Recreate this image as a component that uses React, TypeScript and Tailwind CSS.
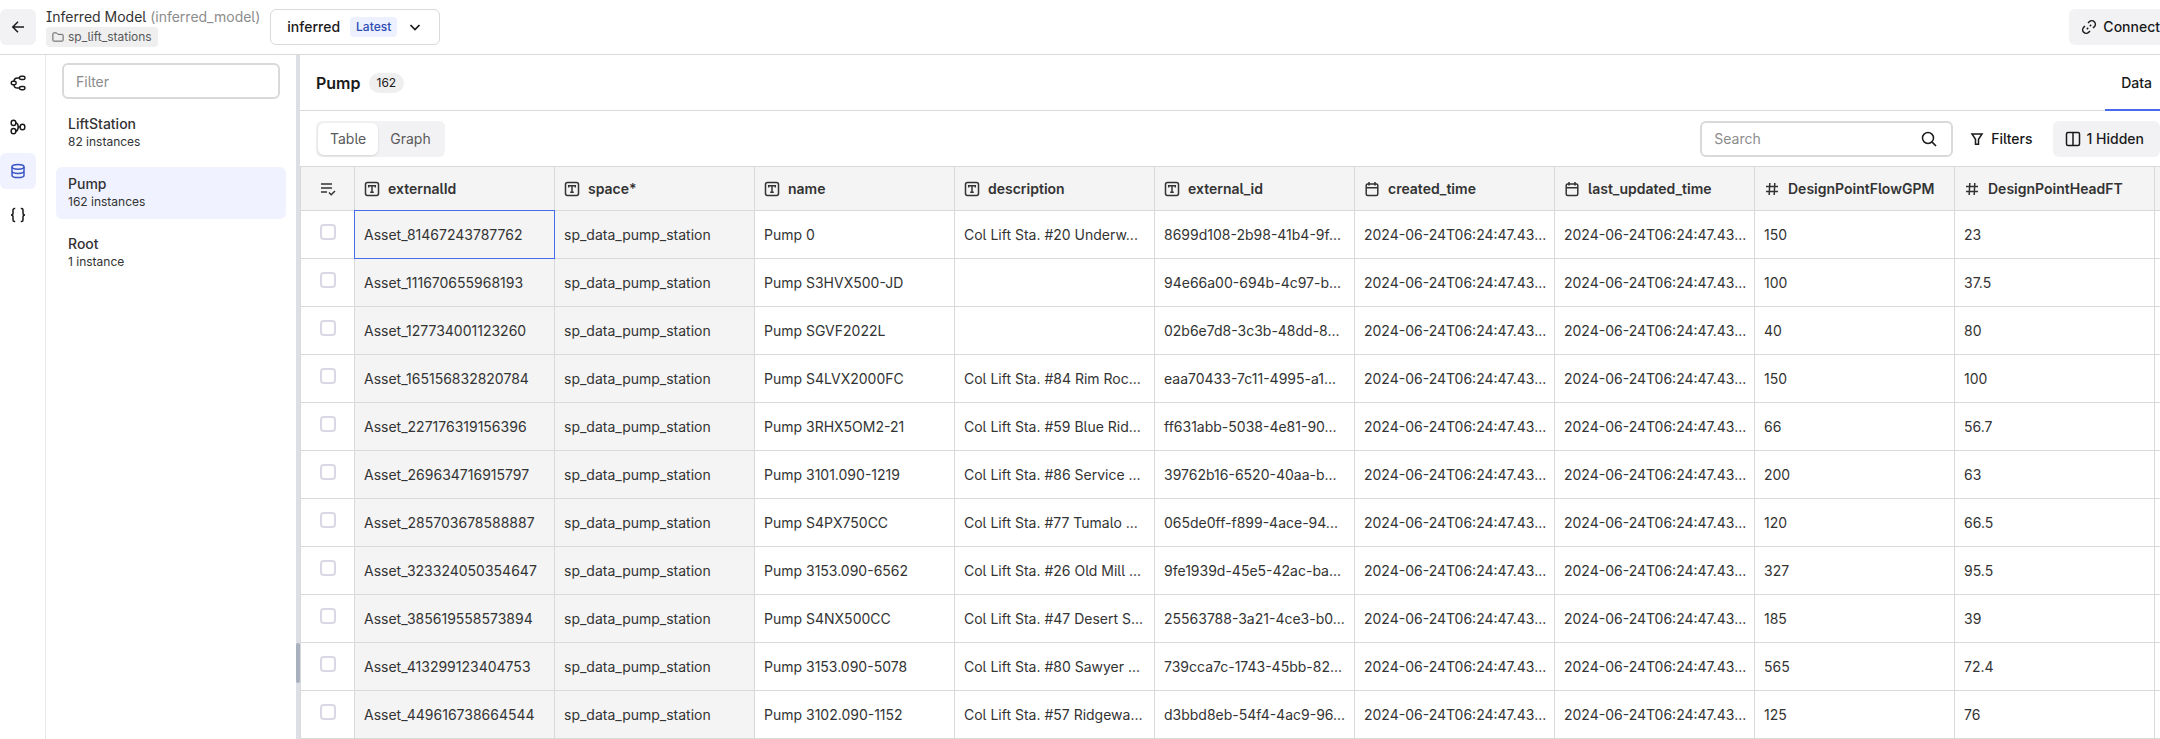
import React from "react";

type IconProps = { className?: string; children: React.ReactNode };

function Icon({ className = "size-4", children }: IconProps) {
  return (
    <svg
      viewBox="0 0 16 16"
      fill="none"
      stroke="currentColor"
      strokeWidth="1.5"
      className={`shrink-0 ${className}`}
      aria-hidden="true"
    >
      {children}
    </svg>
  );
}

const ArrowLeft = () => (
  <Icon>
    <path d="M14 8H3M8 2.8 2.8 8 8 13.2" />
  </Icon>
);
const Folder = () => (
  <Icon className="size-3">
    <path
      d="M1.2 12.5v-9a1 1 0 0 1 1-1h4l1.6 2h6a1 1 0 0 1 1 1v7a1 1 0 0 1-1 1H2.2a1 1 0 0 1-1-1Z"
      strokeWidth="1.3"
    />
  </Icon>
);
const ChevronDown = () => (
  <Icon>
    <path d="m3.5 6 4.5 4.5L12.5 6" strokeWidth="1.7" />
  </Icon>
);
const TreeIcon = () => (
  <Icon>
    <rect x="9.5" y="1.2" width="5.5" height="3.4" rx="1.7" />
    <rect x="9.5" y="11.4" width="5.5" height="3.400" rx="1.7" />
    <rect x="1.2" y="6.300" width="5" height="3.4" rx="1.7" />
    <path d="M9.500 2.900H7.500A3.500 3.500 0 0 0 4 6.300M4 9.700a3.500 3.500 0 0 0 3.500 3.400h2" />
  </Icon>
);
const ClusterIcon = () => (
  <Icon>
    <rect x="1.2" y="1.2" width="4.6" height="5.4" rx="2.3" />
    <rect x="1.2" y="9.400" width="4.6" height="5.4" rx="2.3" />
    <rect x="10.200" y="5.3" width="4.6" height="5.4" rx="2.3" />
    <path d="M5.800 3.600C7.500 4.200 8.200 6 8.200 8s-.7 3.800-2.400 4.400M8.200 8h2" />
  </Icon>
);
const DatabaseIcon = () => (
  <Icon>
    <ellipse cx="8" cy="3.8" rx="6" ry="2.4" />
    <path d="M2 3.800v8.400c0 1.400 2.700 2.400 6 2.400s6-1 6-2.400V3.800M2 8c0 1.400 2.700 2.400 6 2.400S14 9.400 14 8" />
  </Icon>
);
const BracesIcon = () => (
  <Icon>
    <path d="M5.200 1.500h-.7A1.500 1.500 0 0 0 3 3v3.200C3 7.300 2.300 8 1 8c1.300 0 2 .7 2 1.800V13a1.500 1.500 0 0 0 1.500 1.500h.7M10.800 1.500h.7A1.500 1.500 0 0 1 13 3v3.200C13 7.300 13.700 8 15 8c-1.300 0-2 .7-2 1.800V13a1.500 1.500 0 0 1-1.500 1.500h-.7" />
  </Icon>
);
const LinkIcon = () => (
  <Icon>
    <path d="m7 4 1.300-1.300a3.500 3.500 0 0 1 5 5L12 9M9 12l-1.300 1.300a3.500 3.500 0 0 1-5-5L4 7M5.800 10.200l1.400-1.400M8.800 7.200l1.400-1.400" />
  </Icon>
);
const SearchIcon = () => (
  <Icon>
    <circle cx="7" cy="7" r="5.5" />
    <path d="m11 11 4 4" strokeWidth="1.7" />
  </Icon>
);
const FunnelIcon = () => (
  <Icon>
    <path d="M3 3h10L9.500 8.300v5h-3v-5L3 3Z" />
  </Icon>
);
const ColumnsIcon = () => (
  <Icon>
    <rect x="1.5" y="1.5" width="13" height="13" rx="1.5" />
    <path d="M8 1.500v13" />
  </Icon>
);
const ListCheckIcon = () => (
  <Icon>
    <path d="M1 3h11M1 7h11M1 11h6M9 11.500l2.200 2.200L15 10" />
  </Icon>
);
const TextIcon = () => (
  <Icon>
    <rect x="1.5" y="1.5" width="13" height="13" rx="2" />
    <path d="M4.700 6.500V4.700h6.600v1.800M8 4.700v6.600M6.200 11.300h3.600" />
  </Icon>
);
const CalendarIcon = () => (
  <Icon>
    <rect x="2.2" y="3" width="11.6" height="11.5" rx="1.5" />
    <path d="M2.200 6.700h11.600M5 1v3.500M11 1v3.500" />
  </Icon>
);
const HashIcon = () => (
  <Icon>
    <path d="m5.800 2-.6 12M10.800 2l-.6 12M2 5.500h12M2 10.500h12" />
  </Icon>
);

const NAV = [
  { label: "Data model", icon: <TreeIcon /> },
  { label: "Graph", icon: <ClusterIcon /> },
  { label: "Data management", icon: <DatabaseIcon />, active: true },
  { label: "Query explorer", icon: <BracesIcon /> },
];

const TYPES = [
  { name: "LiftStation", count: "82 instances" },
  { name: "Pump", count: "162 instances", active: true },
  { name: "Root", count: "1 instance" },
];

const COLUMNS = [
  { name: "externalId", icon: <TextIcon /> },
  { name: "space*", icon: <TextIcon /> },
  { name: "name", icon: <TextIcon /> },
  { name: "description", icon: <TextIcon /> },
  { name: "external_id", icon: <TextIcon /> },
  { name: "created_time", icon: <CalendarIcon /> },
  { name: "last_updated_time", icon: <CalendarIcon /> },
  { name: "DesignPointFlowGPM", icon: <HashIcon /> },
  { name: "DesignPointHeadFT", icon: <HashIcon /> },
];

const SPACE = "sp_data_pump_station";
const TIME = "2024-06-24T06:24:47.43...";

const ROWS = [
  ["Asset_81467243787762", "Pump 0", "Col Lift Sta. #20 Underw...", "8699d108-2b98-41b4-9f...", "150", "23"],
  ["Asset_111670655968193", "Pump S3HVX500-JD", "", "94e66a00-694b-4c97-b...", "100", "37.5"],
  ["Asset_127734001123260", "Pump SGVF2022L", "", "02b6e7d8-3c3b-48dd-8...", "40", "80"],
  ["Asset_165156832820784", "Pump S4LVX2000FC", "Col Lift Sta. #84 Rim Roc...", "eaa70433-7c11-4995-a1...", "150", "100"],
  ["Asset_227176319156396", "Pump 3RHX5OM2-21", "Col Lift Sta. #59 Blue Rid...", "ff631abb-5038-4e81-90...", "66", "56.7"],
  ["Asset_269634716915797", "Pump 3101.090-1219", "Col Lift Sta. #86 Service ...", "39762b16-6520-40aa-b...", "200", "63"],
  ["Asset_285703678588887", "Pump S4PX750CC", "Col Lift Sta. #77 Tumalo ...", "065de0ff-f899-4ace-94...", "120", "66.5"],
  ["Asset_323324050354647", "Pump 3153.090-6562", "Col Lift Sta. #26 Old Mill ...", "9fe1939d-45e5-42ac-ba...", "327", "95.5"],
  ["Asset_385619558573894", "Pump S4NX500CC", "Col Lift Sta. #47 Desert S...", "25563788-3a21-4ce3-b0...", "185", "39"],
  ["Asset_413299123404753", "Pump 3153.090-5078", "Col Lift Sta. #80 Sawyer ...", "739cca7c-1743-45bb-82...", "565", "72.4"],
  ["Asset_449616738664544", "Pump 3102.090-1152", "Col Lift Sta. #57 Ridgewa...", "d3bbd8eb-54f4-4ac9-96...", "125", "76"],
].map(([id, name, description, externalId, flow, head]) => [
  id,
  SPACE,
  name,
  description,
  externalId,
  TIME,
  TIME,
  flow,
  head,
]);

function TopBar() {
  return (
    <header className="flex h-[55px] shrink-0 items-center border-b border-[#d9d9d9]">
      <button
        aria-label="Back"
        className="flex size-9 shrink-0 items-center justify-center rounded-md bg-[#f2f2f5]"
      >
        <ArrowLeft />
      </button>
      <div className="ml-2.5 flex flex-col items-start">
        <h1 className="text-sm leading-5 text-[#333] [font-feature-settings:'cv05','cv08']">
          Inferred Model <span className="text-[#8c8c8c]">(inferred_model)</span>
        </h1>
        <span className="flex h-5 items-center gap-1 rounded bg-[#efefef] px-1.5 text-xs text-[#595959]">
          <Folder />
          sp_lift_stations
        </span>
      </div>
      <button className="ml-2.5 flex h-9 items-center gap-2.5 rounded-md border border-[#d9d9d9] px-4 text-sm font-medium">
        inferred
        <span className="rounded bg-[#edf0ff] px-1.5 text-xs leading-5 text-[#2b4bb3]">
          Latest
        </span>
        <ChevronDown />
      </button>
      <button className="ml-auto flex h-9 items-center gap-1.5 rounded-l-md bg-[#f2f2f5] pl-3 text-sm font-medium">
        <LinkIcon />
        Connect
      </button>
    </header>
  );
}

function NavRail() {
  return (
    <nav className="flex w-[46px] shrink-0 flex-col gap-2 border-r border-[#e8e8e8] pt-2.5">
      {NAV.map((item) => (
        <button
          key={item.label}
          aria-label={item.label}
          className={`flex size-9 items-center justify-center rounded-md ${
            item.active ? "bg-[#f0f2ff] text-[#3a55c4]" : ""
          }`}
        >
          {item.icon}
        </button>
      ))}
    </nav>
  );
}

function TypeList() {
  return (
    <aside className="w-[250px] shrink-0 px-2.5 pt-2">
      <div className="px-1.5">
        <input
          aria-label="Filter"
          placeholder="Filter"
          className="block h-9 w-full rounded-md border-2 border-[#d9d9d9] px-3 text-sm placeholder:text-[#8c8c8c]"
        />
      </div>
      <ul className="mt-2 flex flex-col gap-2">
        {TYPES.map((type) => (
          <li key={type.name}>
            <button
              className={`flex h-[52px] w-full flex-col justify-center rounded-md px-3 text-left text-[#333] ${
                type.active ? "bg-[#f0f2ff]" : ""
              }`}
            >
              <span className="text-sm leading-[18px] font-medium">{type.name}</span>
              <span className="text-xs leading-[18px]">{type.count}</span>
            </button>
          </li>
        ))}
      </ul>
    </aside>
  );
}

function Toolbar() {
  return (
    <div className="flex h-[55px] shrink-0 items-center pl-4">
      <div className="flex h-9 items-center rounded-md bg-[#f2f2f5] p-0.5 text-sm text-[#595959]">
        <button className="h-8 rounded-md bg-white px-3 shadow-sm">Table</button>
        <button className="h-8 px-3">Graph</button>
      </div>
      <div className="ml-auto flex h-9 w-[253px] items-center rounded-md border-2 border-[#d9d9d9] pr-3.5 pl-3">
        <input
          aria-label="Search"
          placeholder="Search"
          className="min-w-0 flex-1 text-sm outline-none placeholder:text-[#8c8c8c]"
        />
        <SearchIcon />
      </div>
      <button className="ml-4 flex items-center gap-1.5 text-sm font-medium">
        <FunnelIcon />
        Filters
      </button>
      <button className="ml-5 flex h-9 items-center gap-1.5 rounded-md bg-[#f2f2f5] px-3 pr-4 text-sm font-medium">
        <ColumnsIcon />1 Hidden
      </button>
    </div>
  );
}

function DataTable() {
  return (
    <table className="w-full min-w-[1860px] table-fixed border-separate border-spacing-0 border-t border-l border-[#d9d9d9] text-sm text-[#333]">
      <colgroup>
        <col className="w-[54px]" />
        {COLUMNS.map((column) => (
          <col key={column.name} className="w-[200px]" />
        ))}
        <col />
      </colgroup>
      <thead>
        <tr className="h-11 bg-[#f4f4f4]">
          <th aria-label="Select rows" className="border-r border-b border-[#d9d9d9] p-0">
            <span className="flex justify-center">
              <ListCheckIcon />
            </span>
          </th>
          {COLUMNS.map((column) => (
            <th
              key={column.name}
              scope="col"
              className="border-r border-b border-[#d9d9d9] px-[9px] py-0 text-left font-semibold"
            >
              <span className="flex items-center gap-2">
                {column.icon}
                {column.name}
              </span>
            </th>
          ))}
          <td className="border-b border-[#d9d9d9] p-0" />
        </tr>
      </thead>
      <tbody>
        {ROWS.map((row, rowIndex) => (
          <tr key={row[0]} className="h-12">
            <td className="border-r border-b border-[#d9d9d9] p-0">
              <span className="flex justify-center pb-1.5">
                <input
                  type="checkbox"
                  aria-label={`Select ${row[0]}`}
                  className="size-4 appearance-none rounded border-2 border-[#d9d9e6]"
                />
              </span>
            </td>
            {row.map((value, i) => (
              <td
                key={COLUMNS[i].name}
                className={`border-r border-b px-[9px] py-0 whitespace-nowrap ${
                  i < 2 ? "bg-[#f4f4f4]" : ""
                } ${
                  rowIndex === 0 && i === 0
                    ? "border-[#486aed] shadow-[-1px_-1px_0_#486aed,0_-1px_0_#486aed,-1px_0_0_#486aed]"
                    : "border-[#d9d9d9]"
                }`}
              >
                {value}
              </td>
            ))}
            <td className="border-b border-[#d9d9d9] p-0" />
          </tr>
        ))}
      </tbody>
    </table>
  );
}

export default function App() {
  return (
    <div className="flex h-screen flex-col overflow-hidden bg-white font-[Inter,sans-serif] text-[#1a1a1a] antialiased [font-feature-settings:'cv05']">
      <TopBar />
      <div className="flex min-h-0 flex-1">
        <NavRail />
        <TypeList />
        <div className="flex w-1 shrink-0 flex-col bg-[#dcdfe5] pt-[588px]">
          <div className="h-10 rounded-full bg-[#a8b0bd]" />
        </div>
        <main className="flex min-w-0 flex-1 flex-col overflow-hidden">
          <div className="flex h-14 shrink-0 items-center border-b border-[#d9d9d9] pl-4">
            <h2 className="text-base font-semibold">Pump</h2>
            <span className="ml-2 rounded-full bg-[#efefef] px-2 text-xs leading-5">162</span>
            <button className="ml-auto h-14 self-start border-b-2 border-[#486aed] pt-0.5 pr-2 pl-4 text-sm font-medium">
              Data
            </button>
          </div>
          <Toolbar />
          <DataTable />
        </main>
      </div>
    </div>
  );
}
